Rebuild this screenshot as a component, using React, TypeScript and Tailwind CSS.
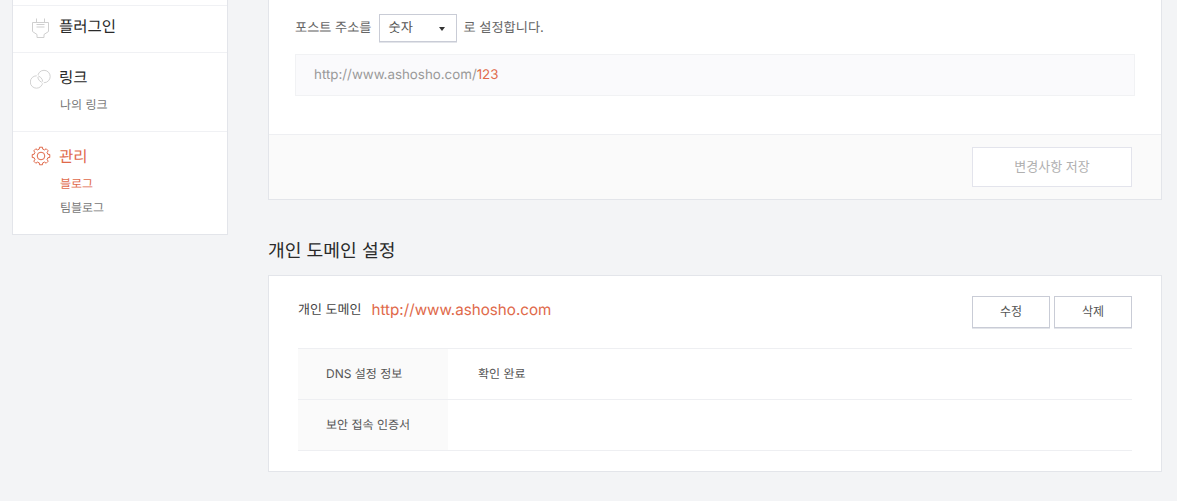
import React from "react";

function PlugIcon() {
  return (
    <svg width="18" height="20" viewBox="0 0 18 20" fill="none" stroke="#cfcfcf" strokeWidth="1">
      <path d="M.5 4.5h16v9l-4.5 3v3H5v-3l-4.5-3z" />
      <path d="M4.5 .5v4M12.5 .5v4" />
      <path d="M4.5 6.5h8M4.5 9h8" />
    </svg>
  );
}

function LinkIcon() {
  return (
    <svg width="22" height="20" viewBox="0 0 22 20" fill="none" stroke="#d2d2d2" strokeWidth="1">
      <circle cx="6.5" cy="13" r="6.2" />
      <circle cx="14" cy="7.5" r="6.2" />
      <circle cx="12.9" cy="13.4" r="1" fill="#fff" stroke="none" />
      <circle cx="7.6" cy="7" r="1" fill="#fff" stroke="none" />
    </svg>
  );
}

function gearPath() {
  const pts: string[] = [];
  const teeth = 8;
  for (let i = 0; i < teeth; i++) {
    const base = (i / teeth) * Math.PI * 2 - Math.PI / 2;
    const spec: [number, number][] = [
      [-0.17, 8.9],
      [0.17, 8.9],
      [0.24, 7.1],
      [0.54, 7.1],
    ];
    spec.forEach(([offset, radius]) => {
      const x = 10 + radius * Math.cos(base + offset);
      const y = 10 + radius * Math.sin(base + offset);
      pts.push(`${x.toFixed(2)} ${y.toFixed(2)}`);
    });
  }
  return "M" + pts.join("L") + "Z";
}

function GearIcon() {
  return (
    <svg width="20" height="20" viewBox="0 0 20 20" fill="none" stroke="#e0694a" strokeWidth="1" strokeLinejoin="round">
      <circle cx="10" cy="10" r="3.8" />
      <path d={gearPath()} />
    </svg>
  );
}

export default function App() {
  return (
    <div className="h-[501px] w-[1177px] overflow-hidden bg-[#f3f4f6] font-['Inter','Noto_Sans_CJK_KR',sans-serif] text-[#333] [text-rendering:geometricPrecision]">
      <div className="flex items-start gap-10 pl-3 pr-[15px]">
        <aside className="w-[216px] shrink-0 border-x border-b border-[#e3e5ea] bg-white">
          <div className="h-[6px] border-b border-[#f0f1f4]" />
          <div className="flex h-[47px] items-start gap-[9px] border-b border-[#f0f1f4] pl-[19px] pt-[11px]">
            <div className="w-[18px] pt-[1px]"><PlugIcon /></div>
            <span className="text-[15.5px] leading-[20px] text-[#2a2a2a]">플러그인</span>
          </div>
          <div className="h-[79px] border-b border-[#f0f1f4] pl-[17px] pt-[15px]">
            <div className="flex items-start gap-[7px]">
              <div className="pt-[1px]"><LinkIcon /></div>
              <span className="text-[15.5px] leading-[20px] text-[#2a2a2a]">링크</span>
            </div>
            <div className="pl-[30px] pt-[7px] text-xs leading-[18px] text-[#777]">나의 링크</div>
          </div>
          <div className="h-[102px] pl-[18px] pt-[15px]">
            <div className="flex items-start gap-[8px]">
              <div className="mt-[-1px]"><GearIcon /></div>
              <span className="text-[15.5px] leading-[20px] text-[#e0694a]">관리</span>
            </div>
            <div className="pl-[29px] pt-[8px] text-xs leading-[18px] text-[#e0694a]">블로그</div>
            <div className="pl-[29px] pt-[6px] text-xs leading-[18px] text-[#777]">팀블로그</div>
          </div>
        </aside>

        <main className="flex-1">
          <section className="border-x border-b border-[#e3e5ea] bg-white">
            <div className="h-[134px] pl-[26px] pr-[26px] pt-[14px]">
              <div className="flex h-[28px] items-center pt-[1px] text-[13.2px] text-[#666]">
                <span>포스트 주소를</span>
                <div className="ml-[7px] mt-[-1px] flex h-[28px] w-[78px] items-center justify-between border border-[#c9ccd6] bg-white pl-[9px] pr-[11px] pt-[1px] text-[#555] shadow-[0_1px_0_#e3e5ea]">
                  <span>숫자</span>
                  <span className="h-0 w-0 border-x-[3.5px] border-t-[4px] border-x-transparent border-t-[#333]" />
                </div>
                <span className="ml-[7px]">로 설정합니다.</span>
              </div>
              <div className="mt-[12px] flex h-[42px] items-center border border-[#f1f2f4] bg-[#fafafc] pl-[18px] pt-[1px] text-[13.33px] text-[#999]">
                http://www.ashosho.com/<span className="text-[#e0694a]">123</span>
              </div>
            </div>
            <div className="flex h-[65px] items-start justify-end border-t border-[#eeeff2] bg-[#fafafa] pr-[29px] pt-[12px]">
              <button className="h-[40px] w-[160px] border border-[#e3e4ec] bg-white text-[13px] text-[#b0b0b0]">변경사항 저장</button>
            </div>
          </section>

          <h2 className="mt-[39px] h-[24px] text-[18.2px] font-normal leading-[24px] text-[#2a2a2a]">개인 도메인 설정</h2>

          <section className="mt-[12px] h-[197px] border border-[#e3e5ea] bg-white px-[29px] pt-[20px]">
            <div className="flex h-[52px] items-start justify-between">
              <div className="flex h-[27px] items-center pt-[1px]">
                <span className="pt-[2px] text-[13px] text-[#444]">개인 도메인</span>
                <span className="ml-[10px] text-[15.2px] text-[#e0694a]">http://www.ashosho.com</span>
              </div>
              <div className="flex gap-1">
                <button className="h-[32px] w-[78px] border border-[#c9ccd6] bg-white text-xs text-[#555] shadow-[0_1px_0_#e3e5ea]">수정</button>
                <button className="h-[32px] w-[78px] border border-[#c9ccd6] bg-white text-xs text-[#555] shadow-[0_1px_0_#e3e5ea]">삭제</button>
              </div>
            </div>
            <div className="border-t border-[#eeeff2] text-xs text-[#555]">
              <div className="flex h-[51px] border-b border-[#eeeff2]">
                <div className="flex w-[150px] items-center bg-[#fafafa] pl-7">DNS 설정 정보</div>
                <div className="flex items-center pl-[30px]">확인 완료</div>
              </div>
              <div className="flex h-[51px] border-b border-[#eeeff2]">
                <div className="flex w-[150px] items-center bg-[#fafafa] pl-7">보안 접속 인증서</div>
              </div>
            </div>
          </section>
        </main>
      </div>
    </div>
  );
}
